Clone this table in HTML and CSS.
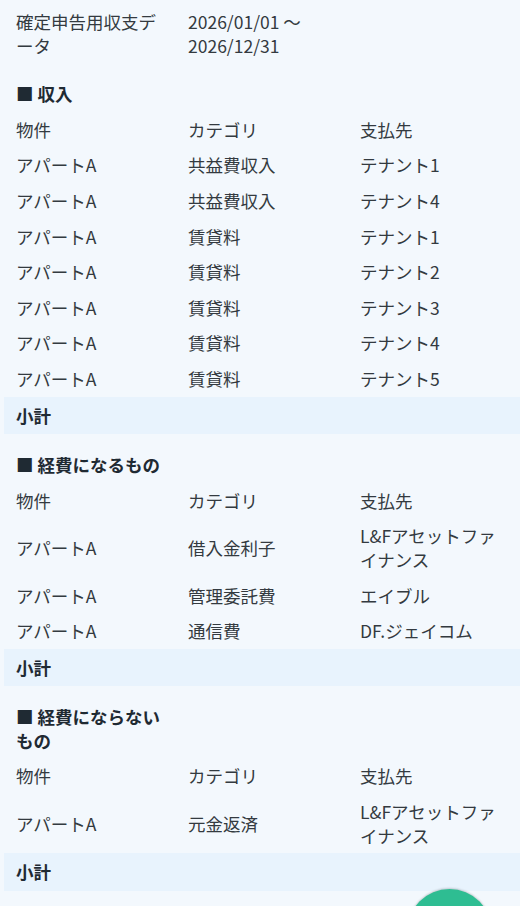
FILE: index.html
```html
<!DOCTYPE html>
<html lang="ja">
<head>
<meta charset="utf-8">
<title>確定申告用収支データ</title>
<link rel="stylesheet" href="styles.css">
</head>
<body>
<div class="page">
  <table class="report">
    <colgroup>
      <col class="c1"><col class="c2"><col class="c3"><col class="c4">
    </colgroup>
    <tbody>
      <tr class="title-row">
        <td>確定申告用収支データ</td>
        <td>2026/01/01 ～ 2026/12/31</td>
        <td></td><td></td>
      </tr>

      <tr class="section"><td>■ 収入</td><td></td><td></td><td></td></tr>
      <tr><td>物件</td><td>カテゴリ</td><td>支払先</td><td></td></tr>
      <tr><td>アパートA</td><td>共益費収入</td><td>テナント1</td><td></td></tr>
      <tr><td>アパートA</td><td>共益費収入</td><td>テナント4</td><td></td></tr>
      <tr><td>アパートA</td><td>賃貸料</td><td>テナント1</td><td></td></tr>
      <tr><td>アパートA</td><td>賃貸料</td><td>テナント2</td><td></td></tr>
      <tr><td>アパートA</td><td>賃貸料</td><td>テナント3</td><td></td></tr>
      <tr><td>アパートA</td><td>賃貸料</td><td>テナント4</td><td></td></tr>
      <tr><td>アパートA</td><td>賃貸料</td><td>テナント5</td><td></td></tr>
      <tr class="subtotal"><td>小計</td><td></td><td></td><td></td></tr>

      <tr class="section"><td>■ 経費になるもの</td><td></td><td></td><td></td></tr>
      <tr><td>物件</td><td>カテゴリ</td><td>支払先</td><td></td></tr>
      <tr><td>アパートA</td><td>借入金利子</td><td>L&amp;Fアセットファイナンス</td><td></td></tr>
      <tr><td>アパートA</td><td>管理委託費</td><td>エイブル</td><td></td></tr>
      <tr><td>アパートA</td><td>通信費</td><td>DF.ジェイコム</td><td></td></tr>
      <tr class="subtotal"><td>小計</td><td></td><td></td><td></td></tr>

      <tr class="section"><td>■ 経費にならないもの</td><td></td><td></td><td></td></tr>
      <tr><td>物件</td><td>カテゴリ</td><td>支払先</td><td></td></tr>
      <tr><td>アパートA</td><td>元金返済</td><td>L&amp;Fアセットファイナンス</td><td></td></tr>
      <tr class="subtotal"><td>小計</td><td></td><td></td><td></td></tr>
    </tbody>
  </table>
</div>
<button class="fab" aria-label="追加"></button>
</body>
</html>
```
FILE: styles.css
```css
html, body {
  margin: 0;
  padding: 0;
  background: #f3f8fd;
  overflow: hidden;
}

body {
  font-family: "Noto Sans CJK JP", "Noto Sans", sans-serif;
  font-size: 17.5px;
  line-height: 23.6px;
  color: #333a40;
}

.page {
  width: 520px;
  height: 906px;
  overflow: hidden;
  padding: 4px 0 0 4px;
  box-sizing: border-box;
}

.report {
  border-collapse: collapse;
  table-layout: fixed;
  width: 700px;
}

.report col.c1,
.report col.c2,
.report col.c3 {
  width: 172px;
}

.report td {
  padding: 6px 12px;
  vertical-align: middle;
  text-align: left;
}

.title-row td {
  vertical-align: top;
}

.section td {
  padding-top: 19px;
  font-weight: bold;
  color: #1f2a33;
}

.subtotal td {
  background: #e8f3fd;
  padding-top: 7px;
  padding-bottom: 7px;
  font-weight: bold;
  color: #1f2a33;
}

.fab {
  position: fixed;
  left: 407px;
  top: 889px;
  width: 85px;
  height: 85px;
  border: none;
  border-radius: 50%;
  background: #2ebd92;
  box-shadow: 0 -1px 2px rgba(0, 0, 0, 0.18);
  padding: 0;
}
```
